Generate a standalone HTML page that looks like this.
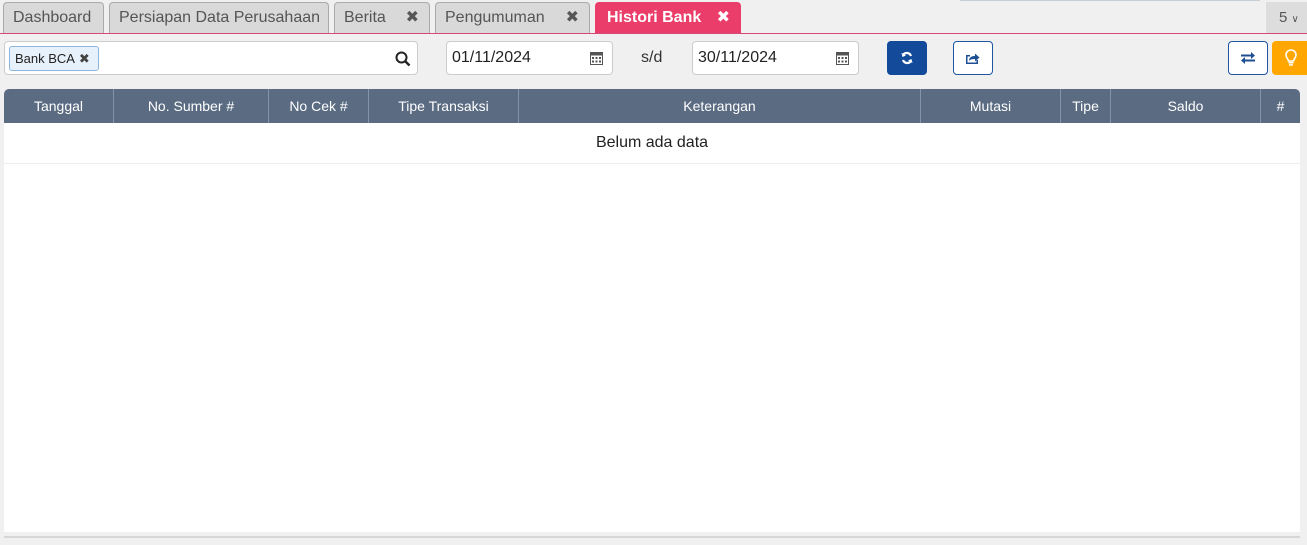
<!DOCTYPE html>
<html><head><meta charset="utf-8"><style>
*{box-sizing:border-box;margin:0;padding:0}
body{width:1307px;height:545px;background:#f0f0f0;font-family:"Liberation Sans","DejaVu Sans",sans-serif;position:relative;overflow:hidden}
.tab{position:absolute;top:2px;height:31px;background:#d9d9d9;border:1px solid #aaa;border-bottom:none;border-radius:4px 4px 0 0;color:#555;font-size:16px;line-height:30px;padding-left:9px}
.tab .x{position:absolute;right:10px;top:0;font-weight:bold;font-size:16px;color:#555}
.active{background:#ea3d6a;border-color:#ea3d6a;color:#fff;font-weight:bold}
.active .x{color:#fff}
.line{position:absolute;left:0;top:33px;width:1307px;height:1px;background:#d6477a}
.inp{position:absolute;top:41px;height:34px;background:#fff;border:1px solid #ccc;border-radius:4px}
.btn{position:absolute;top:41px;height:34px;border-radius:4px;display:flex;align-items:center;justify-content:center}
.hdr{position:absolute;left:4px;top:89px;width:1296px;height:34px;background:#5a6b82;border-radius:5px 5px 0 0;display:flex}
.hdr div{color:#fff;font-size:14px;text-align:center;line-height:34px;border-right:1px solid #8593a6}
.body{position:absolute;left:4px;top:123px;width:1296px;height:409px;background:#fff}
</style></head><body>
<div style="position:absolute;left:960px;top:0;width:300px;height:1px;background:#c8ced6"></div>
<div class="tab" style="left:3px;width:101px">Dashboard</div>
<div class="tab" style="left:109px;width:220px">Persiapan Data Perusahaan</div>
<div class="tab" style="left:334px;width:96px">Berita<span class="x">✖</span></div>
<div class="tab" style="left:435px;width:155px">Pengumuman<span class="x">✖</span></div>
<div class="tab active" style="left:595px;width:146px;padding-left:11px">Histori Bank<span class="x">✖</span></div>
<div style="position:absolute;left:1266px;top:2px;width:41px;height:31px;background:#ddd;color:#555;font-size:15px;line-height:31px;padding-left:13px">5 <span style="font-size:10px">&#8744;</span></div>
<div class="line"></div>

<div class="inp" style="left:4px;width:414px">
 <div style="position:absolute;left:4px;top:4px;height:25px;width:90px;background:#e7f1fb;border:1px solid #8fb6dc;border-radius:3px;font-size:13px;line-height:23px;padding-left:5px;color:#222;white-space:nowrap">Bank BCA <b style="color:#444;margin-left:1px">✖</b></div>
 <svg style="position:absolute;right:6px;top:9px" width="16" height="16" viewBox="0 0 16 16"><circle cx="6.5" cy="6.5" r="5" fill="none" stroke="#222" stroke-width="2"/><path d="M10 10l4.5 4.5" stroke="#222" stroke-width="2.4"/></svg>
</div>
<div class="inp" style="left:446px;width:167px;font-size:16px;line-height:32px;padding-left:5px;color:#222">01/11/2024
 <svg style="position:absolute;right:9px;top:9px" width="13" height="14" viewBox="0 0 13 14"><rect x="0.5" y="1.5" width="12" height="12" fill="none" stroke="#555"/><rect x="0.5" y="1.5" width="12" height="3" fill="#555"/><g fill="#555"><rect x="2" y="6" width="2" height="2"/><rect x="5.5" y="6" width="2" height="2"/><rect x="9" y="6" width="2" height="2"/><rect x="2" y="9.5" width="2" height="2"/><rect x="5.5" y="9.5" width="2" height="2"/><rect x="9" y="9.5" width="2" height="2"/></g></svg></div>
<div style="position:absolute;left:641px;top:49px;font-size:16px;color:#333">s/d</div>
<div class="inp" style="left:692px;width:167px;font-size:16px;line-height:32px;padding-left:5px;color:#222">30/11/2024
 <svg style="position:absolute;right:9px;top:9px" width="13" height="14" viewBox="0 0 13 14"><rect x="0.5" y="1.5" width="12" height="12" fill="none" stroke="#555"/><rect x="0.5" y="1.5" width="12" height="3" fill="#555"/><g fill="#555"><rect x="2" y="6" width="2" height="2"/><rect x="5.5" y="6" width="2" height="2"/><rect x="9" y="6" width="2" height="2"/><rect x="2" y="9.5" width="2" height="2"/><rect x="5.5" y="9.5" width="2" height="2"/><rect x="9" y="9.5" width="2" height="2"/></g></svg></div>

<div class="btn" style="left:887px;width:40px;background:#134a9a"><svg width="14" height="14" viewBox="0 0 14 14"><path d="M11 5A4.5 4.5 0 0 0 3 4M3 9a4.5 4.5 0 0 0 8 1" fill="none" stroke="#fff" stroke-width="2.2"/><path d="M1.5 2l1 4 3.5-1.5zM12.5 12l-1-4-3.5 1.5z" fill="#fff"/></svg></div>
<div class="btn" style="left:953px;width:40px;background:#fff;border:1px solid #1e56a0"><svg width="16" height="14" viewBox="0 0 16 14"><path d="M1 4h4v1.5H2.5v6h9V9H13v4H1z" fill="#1e4f94"/><path d="M4 10c0-4 3-5 6-5V2.5l4.5 4-4.5 4V8c-3 0-5 .5-6 2z" fill="#1e4f94"/></svg></div>
<div class="btn" style="left:1228px;width:40px;background:#fff;border:1px solid #1e56a0"><svg width="16" height="14" viewBox="0 0 16 14"><path d="M1 4.5h11M3 9.5h12" stroke="#1e4f94" stroke-width="2"/><path d="M11 1l4 3.5-4 3.5zM5 6l-4 3.5 4 3.5z" fill="#1e4f94"/></svg></div>
<div class="btn" style="left:1272px;width:40px;background:#ffa600;border-radius:4px 0 0 4px;justify-content:flex-start;padding-left:12px"><svg width="14" height="18" viewBox="0 0 14 18"><path d="M4.5 12c0-2-2.5-3-2.5-6a5 5 0 0 1 10 0c0 3-2.5 4-2.5 6z" fill="none" stroke="#fff" stroke-width="1.6"/><rect x="4.5" y="13" width="5" height="1.5" fill="#fff"/><rect x="5" y="15.2" width="4" height="1.5" fill="#fff"/></svg></div>

<div class="hdr">
 <div style="width:110px">Tanggal</div>
 <div style="width:155px">No. Sumber #</div>
 <div style="width:100px">No Cek #</div>
 <div style="width:150px">Tipe Transaksi</div>
 <div style="width:402px">Keterangan</div>
 <div style="width:140px">Mutasi</div>
 <div style="width:50px">Tipe</div>
 <div style="width:150px">Saldo</div>
 <div style="width:39px;border:none">#</div>
</div>
<div class="body">
 <div style="height:41px;border-bottom:1px solid #ececec;text-align:center;font-size:16px;line-height:40px;color:#222">Belum ada data</div>
</div>
<div style="position:absolute;left:4px;top:536px;width:1296px;height:2px;background:#d6d6d6"></div>
</body></html>
